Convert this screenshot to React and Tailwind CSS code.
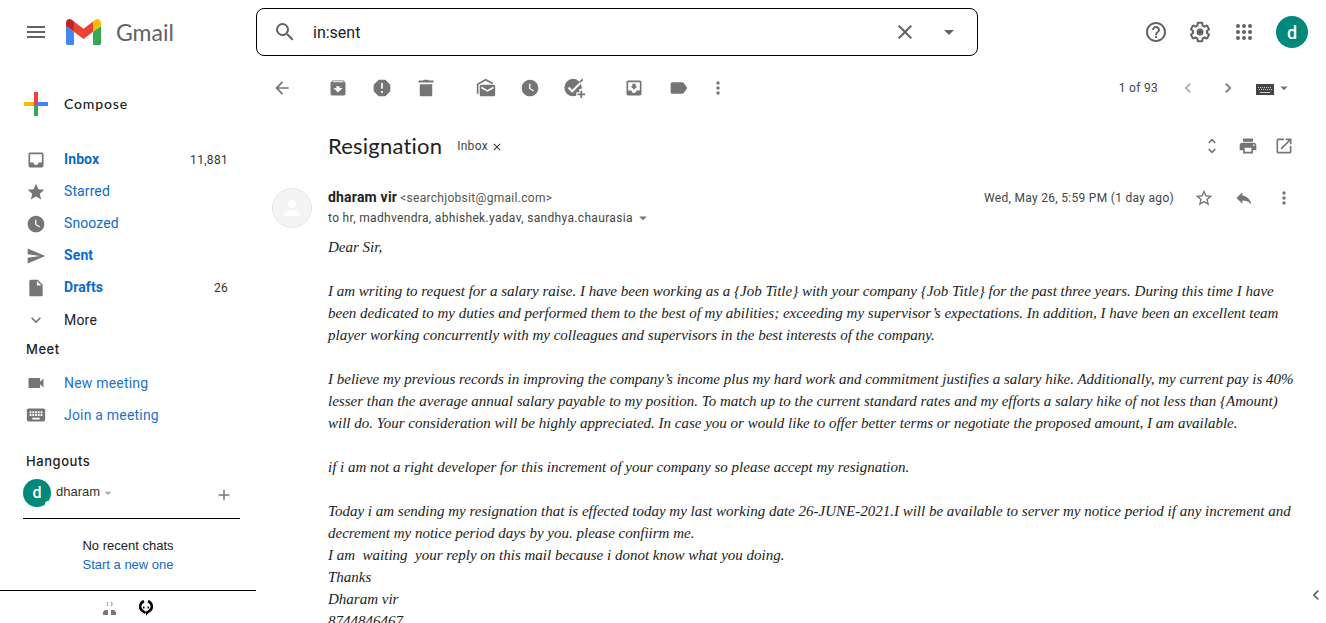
import React from "react";
import {
  MdMenu, MdInbox, MdStar, MdWatchLater, MdSend, MdInsertDriveFile, MdExpandMore, MdVideocam, MdKeyboard,
  MdSearch, MdClose, MdArrowDropDown, MdHelpOutline, MdArrowBack, MdArchive,
  MdMoreVert, MdMoveToInbox, MdUnfoldMore, MdPrint, MdOpenInNew, MdStarBorder, MdReply,
  MdChevronLeft, MdChevronRight, MdAdd, MdPerson,
} from "react-icons/md";

function Slot({ w = "w-11", children }) {
  return <span className={`flex h-10 shrink-0 items-center justify-center ${w}`}>{children}</span>;
}

function Svg({ size = 20, children, className = "" }) {
  return (
    <svg width={size} height={size} viewBox="0 0 24 24" fill="currentColor" className={`shrink-0 ${className}`}>
      {children}
    </svg>
  );
}

function GmailMark() {
  return (
    <svg width="35" height="26.500" viewBox="52 42 88 66" className="shrink-0">
      <path fill="#4285f4" d="M58 108h14V74L52 59v43c0 3.320 2.690 6 6 6" />
      <path fill="#34a853" d="M120 108h14c3.320 0 6-2.690 6-6V59l-20 15" />
      <path fill="#fbbc04" d="M120 48v26l20-15v-8c0-7.420-8.470-11.650-14.400-7.200" />
      <path fill="#ea4335" d="M72 74V48l24 18 24-18v26L96 92" />
      <path fill="#c5221f" d="M52 51v8l20 15V48l-5.600-4.200c-5.940-4.450-14.400-.22-14.400 7.200" />
    </svg>
  );
}

function ComposePlus() {
  return (
    <svg width="24" height="24" viewBox="0 0 24 24" className="shrink-0" shapeRendering="crispEdges">
      <path fill="#34a853" d="M10 12h4v12h-4z" />
      <path fill="#4285f4" d="M12 10h12v4H10z" />
      <path fill="#fbbc04" d="M0 10h12l-2 4H0z" />
      <path fill="#ea4335" d="M10 0h4v10l-4 4z" />
    </svg>
  );
}

const folders = [
  { label: "Inbox", Icon: MdInbox, count: "11,881", bold: true },
  { label: "Starred", Icon: MdStar },
  { label: "Snoozed", Icon: MdWatchLater },
  { label: "Sent", Icon: MdSend, bold: true },
  { label: "Drafts", Icon: MdInsertDriveFile, count: "26", bold: true },
];

function Sidebar() {
  return (
    <aside className="flex h-[559px] w-64 shrink-0 flex-col *:shrink-0">
      <div className="flex h-20 items-center gap-4 pl-6">
        <ComposePlus />
        <span className="pb-[2px] font-[Lato] text-[14px] font-medium tracking-[0.85px] text-[#202124]">Compose</span>
      </div>
      <nav className="flex flex-col">
        {folders.map(({ label, Icon, count, bold }) => (
          <div key={label} className="flex h-8 items-center pr-7 pl-[26px]">
            <Icon className="size-5 text-[#757575]" />
            <span className={`ml-[18px] flex-1 pb-[2px] text-[14px] tracking-[0.1px] text-[#0b6bcb] ${bold ? "font-bold" : ""}`}>{label}</span>
            <span className="text-[12px] tracking-[0.3px] text-[#333]">{count}</span>
          </div>
        ))}
        <div className="flex h-8 items-center pl-[26px]">
          <MdExpandMore className="size-5 text-[#757575]" />
          <span className="ml-[18px] text-[14px] tracking-[0.2px] text-[#202124]">More</span>
        </div>
      </nav>
      <h3 className="flex h-[31px] items-center pb-[3px] pl-[26px] font-[Inter] text-[13px] font-medium tracking-[0.55px] text-[#202124]">Meet</h3>
      <div className="flex h-8 items-center pl-[26px] text-[#1a73d0]">
        <MdVideocam className="size-5 text-[#757575]" />
        <span className="ml-[18px] text-[14px] tracking-[0.2px]">New meeting</span>
      </div>
      <div className="flex h-8 items-center pl-[25px] text-[#1a73d0]">
        <MdKeyboard className="size-[22px] text-[#757575]" />
        <span className="ml-[17px] text-[14px] tracking-[0.2px]">Join a meeting</span>
      </div>
      <h3 className="mt-5 flex h-[21px] items-center pl-[26px] font-[Inter] text-[13px] font-medium tracking-[0.55px] text-[#202124]">Hangouts</h3>
      <div className="mr-4 ml-[23px] flex h-[47px] items-start border-b border-black">
        <span className="relative mt-[7px] flex size-7 items-center justify-center rounded-full bg-[#00897b] text-[16px] font-medium text-white">
          d
          <span className="absolute right-0 bottom-0 size-[6px] rounded-full bg-white" />
        </span>
        <span className="mt-[11px] ml-[5px] font-[Liberation_Sans] text-[13px] leading-[18px] text-[#333]">dharam</span>
        <MdArrowDropDown className="mt-[13px] size-4 text-[#aaa]" />
        <MdAdd className="mt-[14px] mr-[7px] ml-auto size-[18px] text-[#777]" />
      </div>
      <div className="flex h-[71px] flex-col items-center justify-center font-[Liberation_Sans] text-[13px] leading-[19px]">
        <span className="text-[#222]">No recent chats</span>
        <span className="text-[#1068cc]">Start a new one</span>
      </div>
      <div className="flex h-[33px] items-center justify-center gap-[22px] border-t border-black">
        <svg width="14" height="14" viewBox="0 0 14 14" fill="#777" className="mt-[2px]">
          <path d="M0 14v-3l2-2h3v5zM8 9h3l2 2v3H8z" />
          <path d="M5 .8C3.800 2 3.800 4 5 5.200M8 .8C9.200 2 9.200 4 8 5.200" fill="none" stroke="#aaa" strokeWidth="1.200" />
        </svg>
        <svg width="14" height="16" viewBox="0 0 14 16" className="mt-px">
          <path d="M5 1.200C.8 2.500 0 8 3 10.500L6.500 13M9 1.200C13.200 2.500 14 8 11 10.500L7.500 13" fill="none" stroke="#000" strokeWidth="2.600" />
          <path d="M7 11.500h3L7 16zM4 6.500h1.500v2H4zM8.500 6.500H10v2H8.500z" />
        </svg>
      </div>
    </aside>
  );
}

const lines = [
  "Dear Sir,",
  "",
  "I am writing to request for a salary raise. I have been working as a {Job Title} with your company {Job Title} for the past three years. During this time I have",
  "been dedicated to my duties and performed them to the best of my abilities; exceeding my supervisor’s expectations. In addition, I have been an excellent team",
  "player working concurrently with my colleagues and supervisors in the best interests of the company.",
  "",
  "I believe my previous records in improving the company’s income plus my hard work and commitment justifies a salary hike. Additionally, my current pay is 40%",
  "lesser than the average annual salary payable to my position. To match up to the current standard rates and my efforts a salary hike of not less than {Amount)",
  "will do. Your consideration will be highly appreciated. In case you or would like to offer better terms or negotiate the proposed amount, I am available.",
  "",
  "if i am not a right developer for this increment of your company so please accept my resignation.",
  "",
  "Today i am sending my resignation that is effected today my last working date 26-JUNE-2021.I will be available to server my notice period if any increment and",
  "decrement my notice period days by you. please confiirm me.",
  "I am  waiting  your reply on this mail because i donot know what you doing.",
  "Thanks",
  "Dharam vir",
  "8744846467",
];

function Header() {
  return (
    <header className="flex h-16 shrink-0 items-center text-[#5f6368]">
      <div className="flex w-64 items-center pl-6">
        <MdMenu className="size-6" />
        <span className="ml-[18px]"><GmailMark /></span>
        <span className="ml-[15px] font-[Lato] text-[23px] leading-7">Gmail</span>
      </div>
      <div className="flex h-12 w-[722px] items-center rounded-lg border border-black">
        <MdSearch className="ml-4 size-6" />
        <span className="ml-4 flex-1 pt-[2px] text-[16px] text-[#202124]">in:sent</span>
        <Slot><MdClose className="size-6" /></Slot>
        <Slot><MdArrowDropDown className="size-6" /></Slot>
        <span className="w-[6px]" />
      </div>
      <div className="ml-auto flex items-center pr-[10px]">
        <Slot><MdHelpOutline className="size-6" /></Slot>
        <Slot>
          <Svg size={24}>
            <path fillRule="evenodd" d="M13.850 22.250h-3.700c-.74 0-1.360-.54-1.450-1.270l-.27-1.890c-.27-.14-.53-.29-.79-.46l-1.800.72c-.7.260-1.470-.03-1.810-.65L2.200 15.530c-.35-.66-.2-1.440.36-1.880l1.530-1.190c-.01-.15-.02-.3-.02-.46 0-.15.01-.31.02-.46l-1.520-1.190c-.59-.45-.74-1.260-.37-1.880l1.850-3.190c.34-.62 1.110-.9 1.790-.63l1.810.73c.26-.17.52-.32.78-.46l.27-1.910c.09-.7.710-1.250 1.440-1.250h3.700c.74 0 1.360.54 1.450 1.270l.27 1.890c.27.14.53.29.79.46l1.800-.72c.71-.26 1.480.03 1.820.65l1.840 3.180c.36.66.2 1.440-.36 1.880l-1.520 1.190c.01.15.02.3.02.46s-.01.31-.02.46l1.520 1.190c.56.45.72 1.230.37 1.860l-1.860 3.220c-.34.62-1.110.9-1.800.63l-1.800-.72c-.26.17-.52.32-.78.46l-.27 1.910c-.1.680-.72 1.220-1.460 1.220zm-3.230-2h2.760l.37-2.550.53-.22c.44-.18.88-.44 1.340-.78l.45-.34 2.380.96 1.380-2.400-2.030-1.580.07-.56c.03-.26.06-.51.06-.78s-.03-.53-.06-.78l-.07-.56 2.030-1.580-1.390-2.400-2.390.96-.45-.35c-.42-.32-.87-.58-1.330-.77l-.52-.22-.37-2.550h-2.760l-.37 2.550-.53.21c-.44.190-.88.440-1.340.79l-.45.330-2.380-.95-1.390 2.390 2.030 1.580-.07.560a7 7 0 0 0-.06.790c0 .26.020.530.060.780l.07.560-2.030 1.580 1.380 2.400 2.390-.96.45.35c.43.330.860.580 1.330.77l.53.22.38 2.550z" />
            <circle cx="12" cy="12" r="3.500" />
          </Svg>
        </Slot>
        <Slot>
          <Svg size={24}>
            {[6, 12, 18].map((y) => [6, 12, 18].map((x) => <circle key={`${x}-${y}`} cx={x} cy={y} r="2" />))}
          </Svg>
        </Slot>
        <span className="mr-2 ml-[10px] flex size-8 items-center justify-center rounded-full bg-[#00897b] text-[18px] font-medium text-white">d</span>
      </div>
    </header>
  );
}

function Toolbar() {
  return (
    <div className="flex h-12 shrink-0 items-center pl-1 text-[#757575]">
      <Slot><MdArrowBack className="size-5" /></Slot>
      <span className="w-3" />
      <Slot><MdArchive className="size-5" /></Slot>
      <Slot>
        <Svg><path fillRule="evenodd" d="M8 2h8l6 6v8l-6 6H8l-6-6V8zM11 6v7h2V6zM11 15.500v2.500h2v-2.500z" /></Svg>
      </Slot>
      <Slot><Svg><path d="M15.500 3l-1-1h-5l-1 1H3v2.500h18V3zM4.500 7.500V20c0 1.100.9 2 2 2h11c1.100 0 2-.9 2-2V7.500z" /></Svg></Slot>
      <span className="w-4" />
      <Slot>
        <Svg>
          <path d="M21 8H6.500C5.400 8 4.500 8.900 4.500 10v10c0 1.100.9 2 2 2H21c1.100 0 2-.9 2-2V10c0-1.100-.9-2-2-2zm0 4.500l-7.250 4-7.250-4v-2.200l7.250 4 7.250-4z" />
          <path d="M2 19V7.500L11.500 2 20 6.500" fill="none" stroke="currentColor" strokeWidth="2" />
        </Svg>
      </Slot>
      <Slot><MdWatchLater className="size-5" /></Slot>
      <Slot>
        <Svg size={22}>
          <circle cx="11" cy="11.500" r="9.500" />
          <path d="M6 11.500l4 4L21 4.500" fill="none" stroke="#fff" strokeWidth="2.200" />
          <path d="M18.500 5.500l3-3" stroke="currentColor" strokeWidth="2" />
          <path d="M20 13v11M14.500 19h10" stroke="#fff" strokeWidth="4.500" />
          <path d="M20 15v8M16 19h8" stroke="currentColor" strokeWidth="2" />
        </Svg>
      </Slot>
      <span className="w-4" />
      <Slot><MdMoveToInbox className="size-5" /></Slot>
      <Slot><Svg className="ml-px"><path d="M4 5h12c.7 0 1.300.3 1.700.9L22 12l-4.300 6.100c-.4.600-1 .9-1.700.9H4c-1.100 0-2-.9-2-2V7c0-1.100.9-2 2-2z" /></Svg></Slot>
      <Slot w="w-9"><MdMoreVert className="size-5" /></Slot>
      <span className="ml-auto text-[12px] tracking-[0.3px] text-[#444]">1 of 93</span>
      <span className="w-5" />
      <Slot w="w-5"><MdChevronLeft className="size-5 text-[#aaa]" /></Slot>
      <span className="w-5" />
      <Slot w="w-5"><MdChevronRight className="size-5" /></Slot>
      <span className="w-[18px]" />
      <svg width="18" height="11" viewBox="0 0 18 11" className="mt-[3px]">
        <path fill="#444" d="M0 0h18v11H0z" />
        <path d="M2 3.500h14M3 5.500h13" stroke="#ccc" strokeWidth="1" strokeDasharray="1 1" />
        <path d="M4 8.500h10" stroke="#ccc" />
      </svg>
      <MdArrowDropDown className="mr-[33px] ml-[1px] size-[18px]" />
    </div>
  );
}

function Message() {
  return (
    <section className="min-h-0 flex-1 overflow-hidden">
      <div className="flex h-[68px] items-center pr-8 pl-[72px] text-[#757575]">
        <h1 className="pb-px font-[Lato] text-[22px] leading-7 tracking-[0.2px] text-[#202124]">Resignation</h1>
        <span className="ml-[15px] text-[12px] tracking-[0.3px] text-[#444]">Inbox</span>
        <MdClose className="mt-px ml-[3px] size-3 text-[#333]" />
        <div className="ml-auto flex items-center gap-4">
          <MdUnfoldMore className="size-5" />
          <MdPrint className="size-5" />
          <MdOpenInNew className="size-5" />
        </div>
      </div>
      <div className="flex h-[56px] pr-8 pl-4">
        <span className="mt-2 flex size-10 items-center justify-center rounded-full border border-[#e6e6e6] bg-[#f4f4f4]">
          <MdPerson className="size-6 text-white" />
        </span>
        <div className="ml-4 flex flex-col pt-[7px]">
          <div className="flex h-5 items-center">
            <span className="text-[14px] font-bold tracking-[0.2px] text-[#202124]">dharam vir</span>
            <span className="ml-[3px] pt-px text-[12px] tracking-[0.3px] text-[#555]">&lt;searchjobsit@gmail.com&gt;</span>
          </div>
          <div className="flex h-[22px] items-center text-[12px] tracking-[0.33px] text-[#444]">
            to hr, madhvendra, abhishek.yadav, sandhya.chaurasia
            <MdArrowDropDown className="ml-[1px] size-[18px] text-[#757575]" />
          </div>
        </div>
        <div className="mt-2 ml-auto flex h-5 items-center text-[#757575]">
          <span className="text-[12px] tracking-[0.3px] text-[#444]">Wed, May 26, 5:59 PM (1 day ago)</span>
          <MdStarBorder className="ml-5 size-5" />
          <MdReply className="ml-5 size-5" />
          <MdMoreVert className="ml-5 size-5" />
        </div>
      </div>
      <div className="pl-[72px] font-['Liberation_Serif'] text-[15px] leading-[22px] text-[#222] italic">
        {lines.map((t, i) => (
          <p key={i} className="h-[22px] whitespace-pre">{t}</p>
        ))}
      </div>
    </section>
  );
}

export default function App() {
  return (
    <div className="flex h-[623px] w-[1326px] flex-col overflow-hidden bg-white font-[Roboto,sans-serif]">
      <Header />
      <div className="flex min-h-0 flex-1">
        <Sidebar />
        <main className="relative flex min-w-0 flex-1 flex-col">
          <Toolbar />
          <Message />
          <MdChevronLeft className="absolute right-0 bottom-[18px] size-5 text-[#5f6368]" />
        </main>
      </div>
    </div>
  );
}
